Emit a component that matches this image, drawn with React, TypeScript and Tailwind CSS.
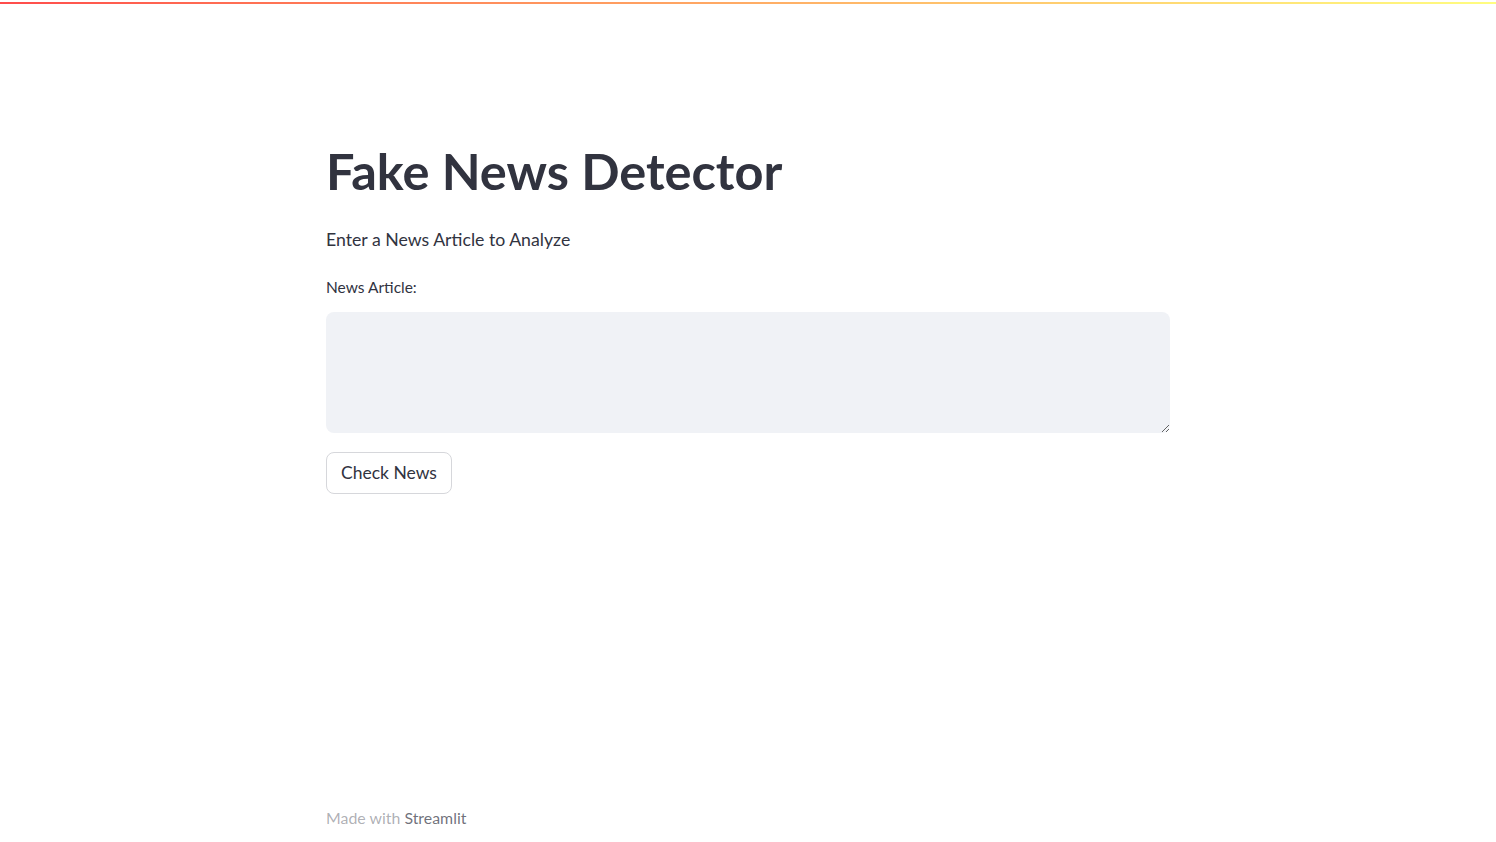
import { useState } from "react"

export default function App() {
  const [article, setArticle] = useState("")

  return (
    <div className="relative min-h-[842px] w-full bg-white text-[#31333f] font-['Lato','Noto_Sans',sans-serif]">
      {/* Top decoration bar */}
      <div className="pt-[2px]">
        <div className="h-[2px] w-full bg-gradient-to-r from-[#ff4b4b] to-[#fffd80]" />
      </div>

      <div className="flex min-h-[838px] flex-col">
        <main className="mx-auto w-[844px] flex-1 pt-[137px]">
          <h1 className="text-[50.5px] font-bold leading-[1.2]">Fake News Detector</h1>

          <p className="mt-[24.5px] text-[17.7px] leading-[1.6]">Enter a News Article to Analyze</p>

          <label className="mt-[21px] block text-[15.5px] leading-[1.6]">News Article:</label>
          <textarea
            value={article}
            onChange={(e) => setArticle(e.target.value)}
            className="mt-[12px] block h-[121px] w-full resize-y rounded-lg bg-[#f0f2f6] px-3 py-2 text-base outline-none"
          />

          <button className="mt-[19px] h-[42px] rounded-lg border border-[#d6d7db] bg-white px-[14px] text-[17.5px] text-[#31333f]">
            Check News
          </button>
        </main>

        <footer className="mx-auto w-[844px] pb-[12px] text-[15.9px] leading-[1.6] text-[#31333f]/40">
          Made with <span className="text-[#31333f]/70">Streamlit</span>
        </footer>
      </div>
    </div>
  )
}
